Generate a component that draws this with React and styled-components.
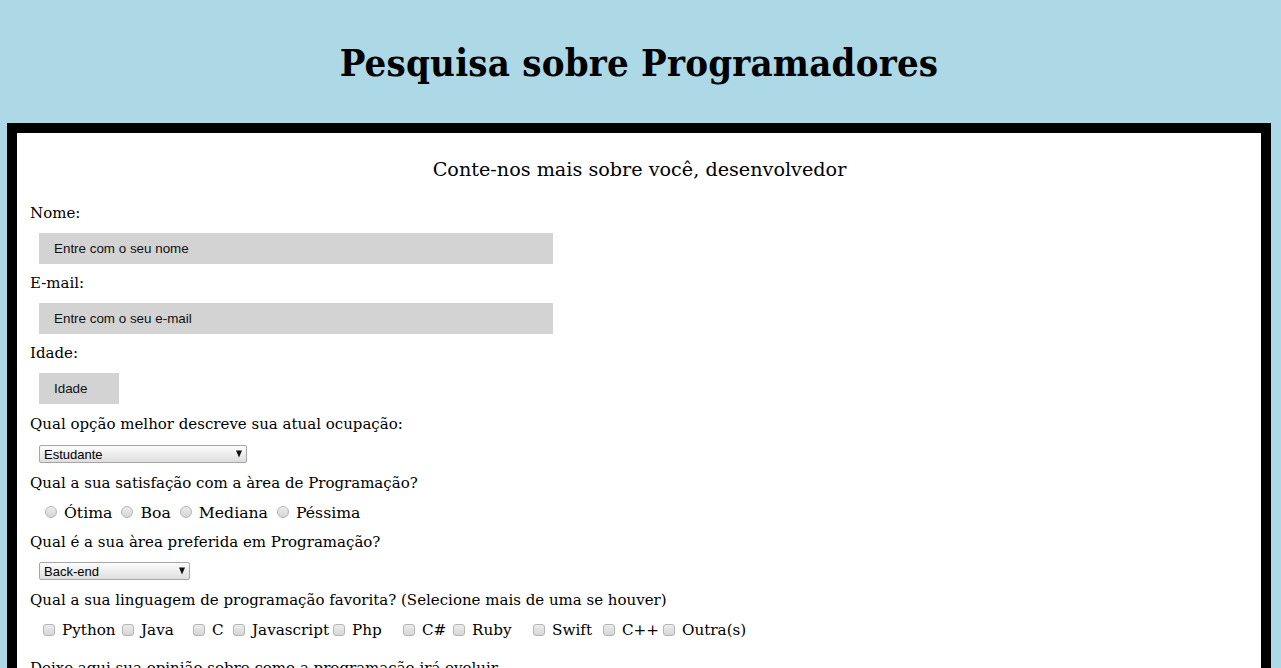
import React from "react";
import styled, { createGlobalStyle } from "styled-components";

const Global = createGlobalStyle`
  html, body { margin: 0; padding: 0; }
  body {
    background: #add8e6;
    font-family: "DejaVu Serif", serif;
    color: #000;
  }
`;

const Page = styled.div`
  padding: 0 10px 0 7px;
`;

const Title = styled.h1`
  margin: 0;
  height: 123px;
  padding-top: 2px;
  box-sizing: border-box;
  display: flex;
  align-items: center;
  justify-content: center;
  font-size: 38px;
  font-weight: bold;
  font-stretch: condensed;
  letter-spacing: 0.2px;
`;

const Card = styled.form`
  background: #fff;
  border: 10px solid #000;
  border-bottom: none;
  padding: 0 12px 0 13px;
  height: 600px;
`;

const Subtitle = styled.h2`
  margin: 0;
  padding-top: 25px;
  height: 45px;
  line-height: 24px;
  text-align: center;
  font-size: 19.2px;
  font-weight: normal;
`;

const Label = styled.div`
  font-size: 15px;
  line-height: 20px;
  height: 20px;
  white-space: nowrap;
`;

const Field = styled.div`
  padding: ${(p) => p.$pad || "10px 0 9px 9px"};
`;

const TextInput = styled.input`
  display: block;
  box-sizing: border-box;
  width: ${(p) => p.$w}px;
  height: 31px;
  border: none;
  outline: none;
  background: #d3d3d3;
  padding: 0 0 0 15px;
  font-family: "Liberation Sans", Arial, sans-serif;
  font-size: 13.4px;
  &::placeholder { color: #111; }
`;

const SelectWrap = styled.div`
  position: relative;
  width: ${(p) => p.$w}px;
  height: ${(p) => p.$h}px;
`;

const Select = styled.select`
  appearance: none;
  -webkit-appearance: none;
  display: block;
  box-sizing: border-box;
  width: 100%;
  height: 100%;
  margin: 0;
  border: 1px solid #a6a6a6;
  border-radius: 2px;
  background: linear-gradient(#fdfdfd, #dedede);
  padding: 0 0 0 4px;
  font-family: "Liberation Sans", Arial, sans-serif;
  font-size: 13px;
  color: #000;
  outline: none;
`;

const Arrow = styled.span`
  position: absolute;
  right: 5px;
  top: 50%;
  transform: translateY(-50%);
  width: 0;
  height: 0;
  border-left: 3.5px solid transparent;
  border-right: 3.5px solid transparent;
  border-top: 7px solid #111;
  pointer-events: none;
`;

const Row = styled.div`
  box-sizing: border-box;
  height: ${(p) => p.$h}px;
  padding-top: ${(p) => p.$pt}px;
`;

const OptionRow = styled.div`
  display: flex;
  align-items: center;
  height: 20px;
  padding-left: ${(p) => p.$pl}px;
  font-size: ${(p) => p.$fs}px;
  white-space: nowrap;
`;

const boxBase = `
  appearance: none;
  -webkit-appearance: none;
  box-sizing: border-box;
  width: 12px;
  height: 12px;
  flex: none;
  border: 1px solid #b5b5b5;
  background: linear-gradient(#ececec, #d6d6d6);
`;

const Radio = styled.input.attrs({ type: "radio" })`
  ${boxBase}
  border-radius: 50%;
  margin: 0 7px 0 0;
`;

const Checkbox = styled.input.attrs({ type: "checkbox" })`
  ${boxBase}
  border-radius: 3px;
  margin: 0 7px 0 0;
`;

const RadioItem = styled.label`
  display: inline-flex;
  align-items: center;
  margin-right: 9px;
`;

const CheckItem = styled.label`
  display: inline-flex;
  align-items: center;
  width: ${(p) => p.$w}px;
`;

const langs = [
  ["Python", 79],
  ["Java", 71],
  ["C", 40],
  ["Javascript", 100],
  ["Php", 70],
  ["C#", 50],
  ["Ruby", 80],
  ["Swift", 70],
  ["C++", 60],
  ["Outra(s)", 90],
];

export default function App() {
  return (
    <Page>
      <Global />
      <Title>Pesquisa sobre Programadores</Title>
      <Card onSubmit={(e) => e.preventDefault()}>
        <Subtitle>Conte-nos mais sobre você, desenvolvedor</Subtitle>
        <Label>Nome:</Label>
        <Field>
          <TextInput $w={514} placeholder="Entre com o seu nome" />
        </Field>
        <Label>E-mail:</Label>
        <Field>
          <TextInput $w={514} placeholder="Entre com o seu e-mail" />
        </Field>
        <Label>Idade:</Label>
        <Field $pad="10px 0 10px 9px">
          <TextInput $w={80} placeholder="Idade" />
        </Field>
        <Label>Qual opção melhor descreve sua atual ocupação:</Label>
        <Field $pad="11px 0 10px 9px">
          <SelectWrap $w={208} $h={18}>
            <Select>
              <option>Estudante</option>
              <option>Profissional</option>
            </Select>
            <Arrow />
          </SelectWrap>
        </Field>
        <Label>Qual a sua satisfação com a àrea de Programação?</Label>
        <Row $h={39} $pt={9}>
          <OptionRow $pl={15} $fs={15.7}>
            {["Ótima", "Boa", "Mediana", "Péssima"].map((t) => (
              <RadioItem key={t}>
                <Radio name="sat" />
                {t}
              </RadioItem>
            ))}
          </OptionRow>
        </Row>
        <Label>Qual é a sua àrea preferida em Programação?</Label>
        <Field $pad="10px 0 10px 9px">
          <SelectWrap $w={151} $h={18}>
            <Select>
              <option>Back-end</option>
              <option>Front-end</option>
            </Select>
            <Arrow />
          </SelectWrap>
        </Field>
        <Label>Qual a sua linguagem de programação favorita? (Selecione mais de uma se houver)</Label>
        <Row $h={48} $pt={10}>
          <OptionRow $pl={13} $fs={15.2}>
            {langs.map(([t, w]) => (
              <CheckItem key={t} $w={w}>
                <Checkbox />
                {t}
              </CheckItem>
            ))}
          </OptionRow>
        </Row>
        <Label>Deixe aqui sua opinião sobre como a programação irá evoluir</Label>
      </Card>
    </Page>
  );
}
